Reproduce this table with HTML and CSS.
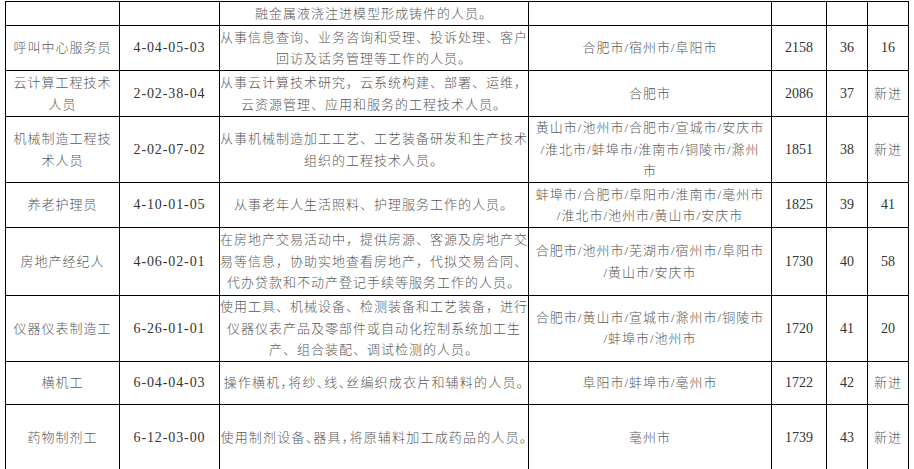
FILE: index.html
```html
<!DOCTYPE html>
<html lang="zh-CN">
<head>
<meta charset="utf-8">
<title>职业目录</title>
<link rel="stylesheet" href="styles.css">
</head>
<body>
<table class="grid">
  <colgroup>
    <col class="w-name"><col class="w-code"><col class="w-desc"><col class="w-city"><col class="w-num"><col class="w-rank"><col class="w-chg">
  </colgroup>
  <tbody>
    <tr class="r0">
      <td class="t"></td><td class="num"></td>
      <td class="t">融金属液浇注进模型形成铸件的人员。</td>
      <td class="t"></td><td class="num"></td><td class="num"></td><td class="num"></td>
    </tr>
    <tr class="r1">
      <td class="t">呼叫中心服务员</td>
      <td class="num code">4-04-05-03</td>
      <td class="t">从事信息查询、业务咨询和受理、投诉处理、客户<br>回访及话务管理等工作的人员。</td>
      <td class="t city">合肥市/宿州市/阜阳市</td>
      <td class="num">2158</td><td class="num">36</td><td class="num">16</td>
    </tr>
    <tr class="r2">
      <td class="t">云计算工程技术<br>人员</td>
      <td class="num code">2-02-38-04</td>
      <td class="t">从事云计算技术研究，云系统构建、部署、运维，<br>云资源管理、应用和服务的工程技术人员。</td>
      <td class="t city">合肥市</td>
      <td class="num">2086</td><td class="num">37</td><td class="t">新进</td>
    </tr>
    <tr class="r3">
      <td class="t">机械制造工程技<br>术人员</td>
      <td class="num code">2-02-07-02</td>
      <td class="t">从事机械制造加工工艺、工艺装备研发和生产技术<br>组织的工程技术人员。</td>
      <td class="t city">黄山市/池州市/合肥市/宣城市/安庆市<br>/淮北市/蚌埠市/淮南市/铜陵市/滁州<br>市</td>
      <td class="num">1851</td><td class="num">38</td><td class="t">新进</td>
    </tr>
    <tr class="r4">
      <td class="t">养老护理员</td>
      <td class="num code">4-10-01-05</td>
      <td class="t">从事老年人生活照料、护理服务工作的人员。</td>
      <td class="t city">蚌埠市/合肥市/阜阳市/淮南市/亳州市<br>/淮北市/池州市/黄山市/安庆市</td>
      <td class="num">1825</td><td class="num">39</td><td class="num">41</td>
    </tr>
    <tr class="r5">
      <td class="t">房地产经纪人</td>
      <td class="num code">4-06-02-01</td>
      <td class="t">在房地产交易活动中，提供房源、客源及房地产交<br>易等信息，协助实地查看房地产，代拟交易合同、<br>代办贷款和不动产登记手续等服务工作的人员。</td>
      <td class="t city">合肥市/池州市/芜湖市/宿州市/阜阳市<br>/黄山市/安庆市</td>
      <td class="num">1730</td><td class="num">40</td><td class="num">58</td>
    </tr>
    <tr class="r6">
      <td class="t">仪器仪表制造工</td>
      <td class="num code">6-26-01-01</td>
      <td class="t">使用工具、机械设备、检测装备和工艺装备，进行<br>仪器仪表产品及零部件或自动化控制系统加工生<br>产、组合装配、调试检测的人员。</td>
      <td class="t city">合肥市/黄山市/宣城市/滁州市/铜陵市<br>/蚌埠市/池州市</td>
      <td class="num">1720</td><td class="num">41</td><td class="num">20</td>
    </tr>
    <tr class="r7">
      <td class="t">横机工</td>
      <td class="num code">6-04-04-03</td>
      <td class="t tight">操作横机，将纱、线、丝编织成衣片和辅料的人员。</td>
      <td class="t city">阜阳市/蚌埠市/亳州市</td>
      <td class="num">1722</td><td class="num">42</td><td class="t">新进</td>
    </tr>
    <tr class="r8">
      <td class="t">药物制剂工</td>
      <td class="num code">6-12-03-00</td>
      <td class="t tight">使用制剂设备、器具，将原辅料加工成药品的人员。</td>
      <td class="t city">亳州市</td>
      <td class="num">1739</td><td class="num">43</td><td class="t">新进</td>
    </tr>
  </tbody>
</table>
</body>
</html>
```

FILE: styles.css
```css
html, body {
  margin: 0;
  padding: 0;
  background: #ffffff;
}

body {
  padding: 1px 0 0 5px;
  overflow: hidden;
}

.grid {
  border-collapse: collapse;
  table-layout: fixed;
  width: 904px;
}

.w-name { width: 114px; }
.w-code { width: 100px; }
.w-desc { width: 309px; }
.w-city { width: 243px; }
.w-num  { width: 55px; }
.w-rank { width: 41px; }
.w-chg  { width: 41px; }

.grid td {
  border: 1px solid #000000;
  padding: 0;
  text-align: center;
  vertical-align: middle;
  white-space: nowrap;
  overflow: hidden;
  line-height: 21.5px;
}

.t {
  font-family: "Liberation Serif", "Noto Sans CJK SC", serif;
  font-size: 13px;
  font-weight: 300;
  letter-spacing: 1px;
  color: #585858;
}

.city {
  word-spacing: 0;
}

.tight {
  font-feature-settings: "halt" 1;
  letter-spacing: 1.2px;
}

.num {
  font-family: "Liberation Serif", serif;
  font-size: 14px;
  color: #333333;
}

.code {
  letter-spacing: 0.9px;
}

.r0 { height: 24px; }
.r1 { height: 45px; }
.r2 { height: 46px; }
.r3 { height: 66px; }
.r4 { height: 45px; }
.r5 { height: 68px; }
.r6 { height: 65px; }
.r7 { height: 43px; }
.r8 { height: 67px; }
```
